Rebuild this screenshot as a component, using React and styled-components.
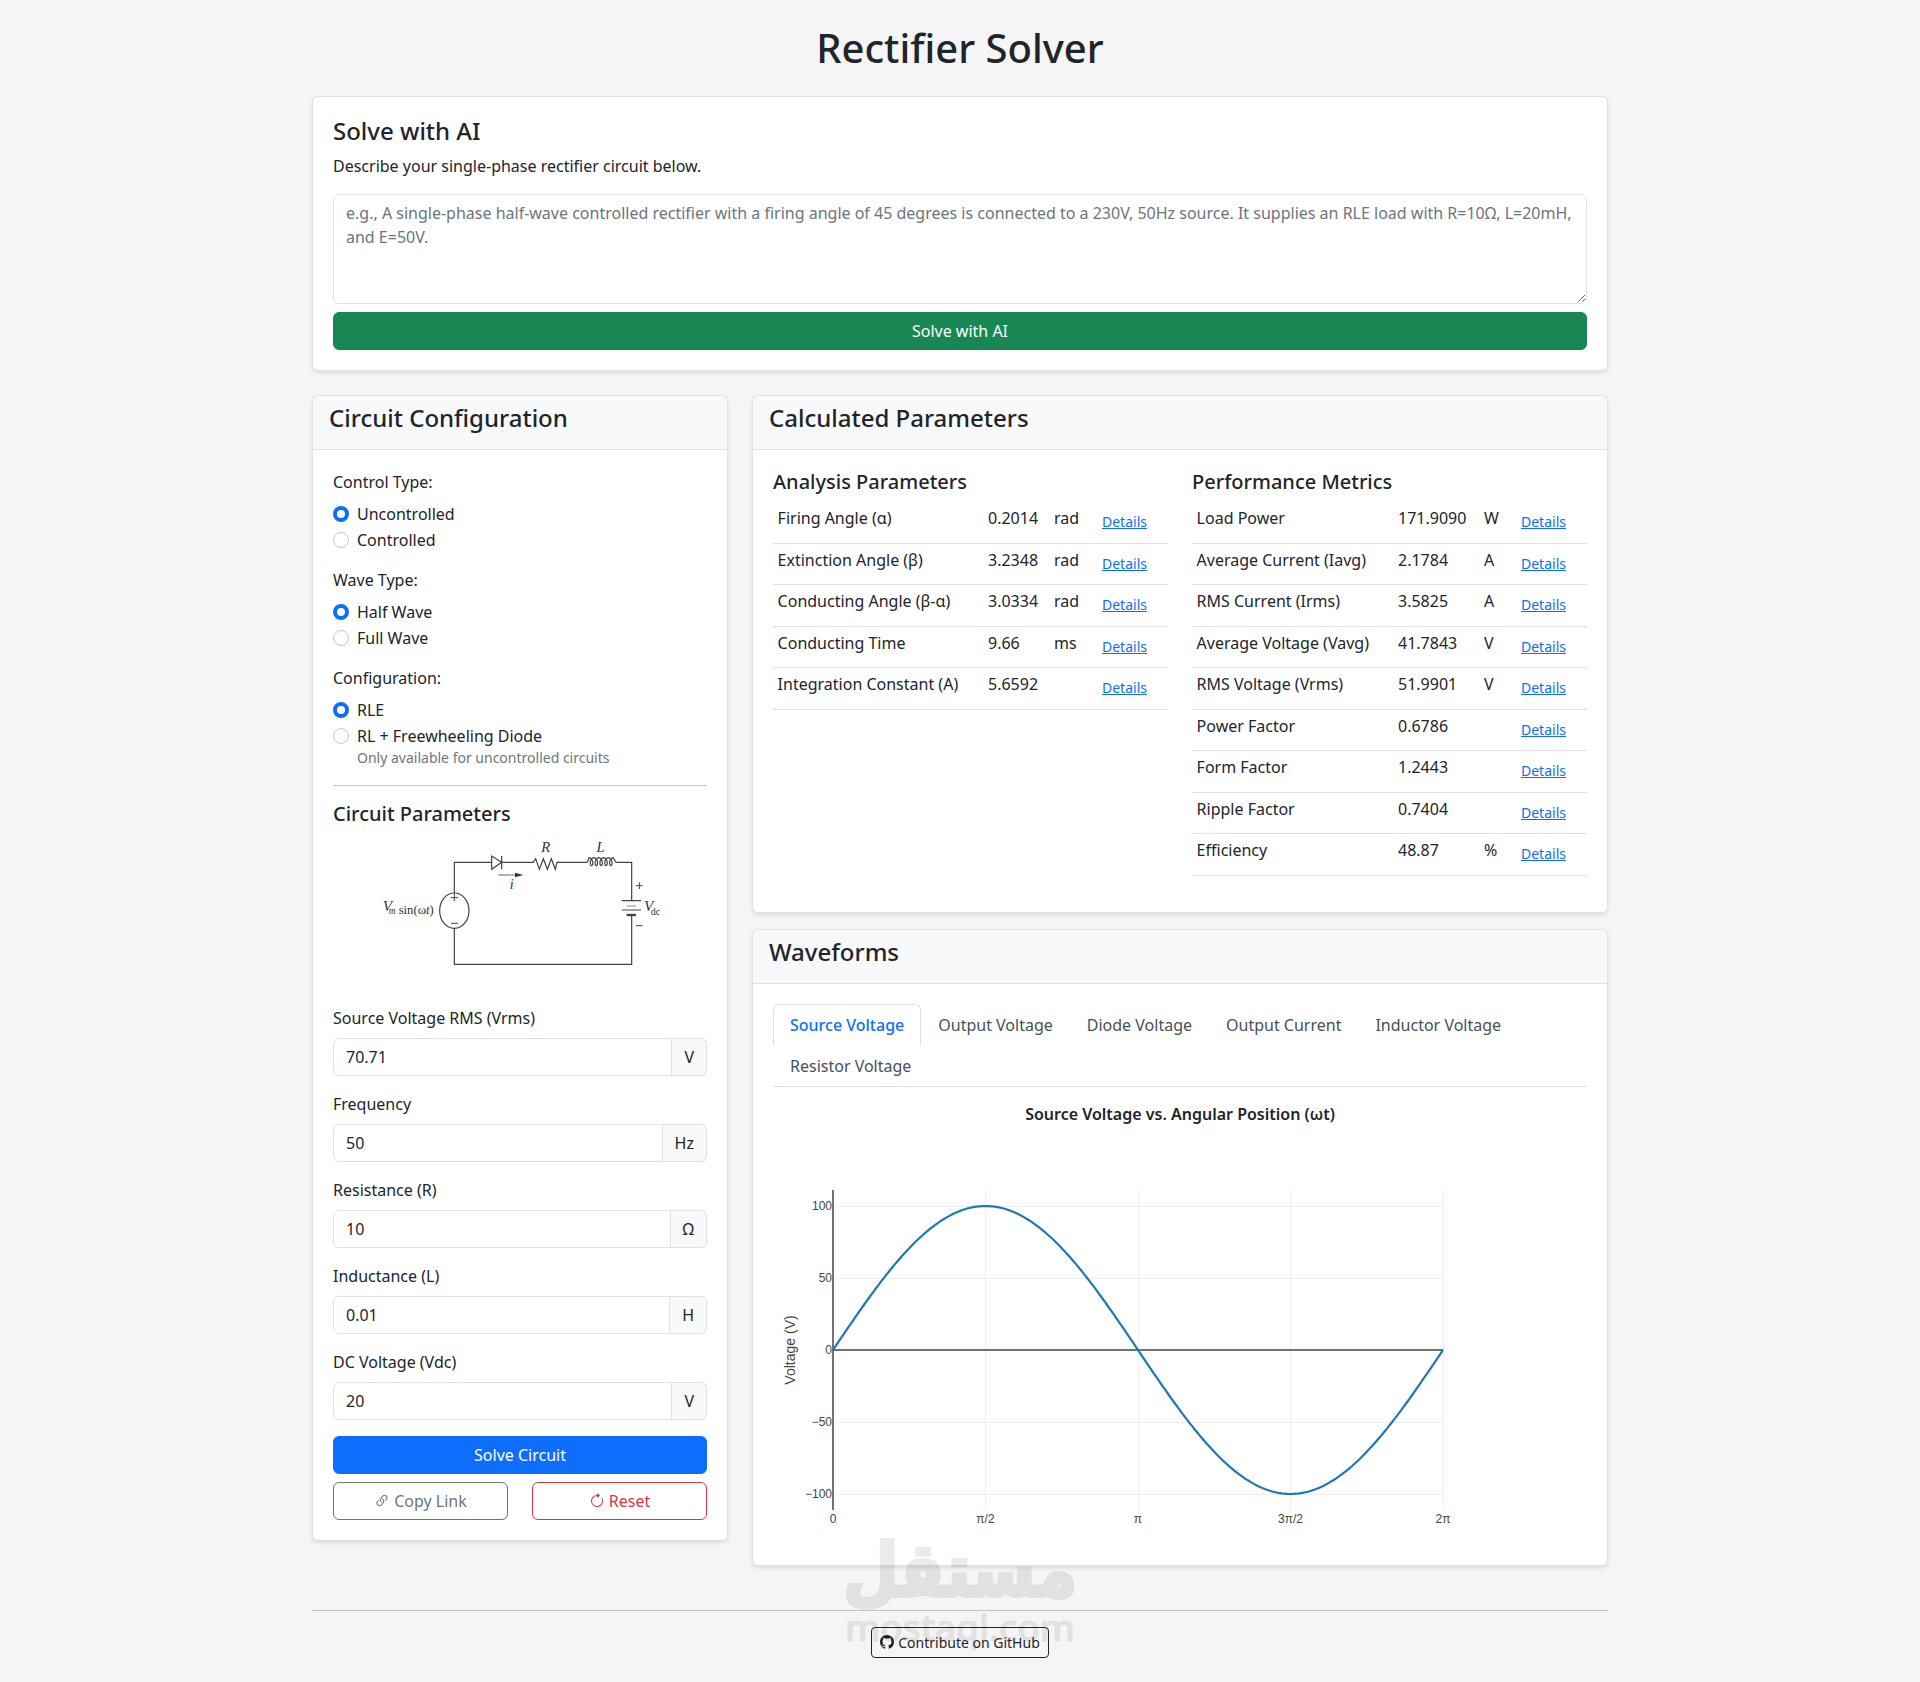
import React from "react";
import styled, { createGlobalStyle } from "styled-components";
import { BsLink45Deg, BsArrowClockwise, BsGithub } from "react-icons/bs";

const GlobalStyle = createGlobalStyle`
  * { box-sizing: border-box; }
  body {
    margin: 0;
    background: #f5f5f5;
    color: #212529;
    font-family: "Noto Sans", sans-serif;
    font-size: 16px;
    line-height: 1.5;
  }
`;

const Page = styled.div`
  position: relative;
  width: 1296px;
  height: 1682px;
  margin: 0 auto;
  padding-top: 24px;
`;

const Title = styled.h1`
  margin: 0 0 24px;
  font-size: 40px;
  font-weight: 500;
  line-height: 48px;
  text-align: center;
`;

const Card = styled.section`
  background: #fff;
  border: 1px solid #dfe1e3;
  border-radius: 6px;
  box-shadow: 0 2px 4px rgba(0, 0, 0, 0.1);
  margin-bottom: ${({ $gap }) => $gap ?? 16}px;
  overflow: hidden;
`;

const CardHeader = styled.div`
  background: #f8f9fa;
  border-bottom: 1px solid #dfe1e3;
  padding: 8px 16px 16px;
`;

const CardBody = styled.div`
  padding: 20px;
`;

const CardTitle = styled.h4`
  margin: 0 0 ${({ $flush }) => ($flush ? "0" : "8px")};
  font-size: 24px;
  font-weight: 500;
  line-height: 28.8px;
`;

const Lead = styled.p`
  margin: 0 0 16px;
`;

const Prompt = styled.textarea`
  display: block;
  width: 100%;
  height: 110px;
  padding: 6px 12px;
  border: 1px solid #dee2e6;
  border-radius: 6px;
  font: inherit;
  color: #212529;
  margin-bottom: 8px;
  outline: none;
  &::placeholder {
    color: #6c757d;
    opacity: 1;
  }
`;

const Button = styled.button`
  display: block;
  width: 100%;
  height: 38px;
  padding: 6px 12px;
  border: 1px solid ${({ $color }) => $color};
  border-radius: 6px;
  background: ${({ $outline, $color }) => ($outline ? "transparent" : $color)};
  color: ${({ $outline, $color }) => ($outline ? $color : "#fff")};
  font: inherit;
  text-align: center;
  cursor: pointer;
  svg {
    font-size: 16px;
    vertical-align: -2px;
    margin-right: 4px;
  }
`;

const Columns = styled.div`
  display: grid;
  grid-template-columns: 416px 856px;
  column-gap: 24px;
  align-items: start;
`;

const Group = styled.div`
  margin-bottom: 16px;
`;

const Label = styled.label`
  display: block;
  margin-bottom: 8px;
`;

const Check = styled.label`
  display: flex;
  align-items: flex-start;
  min-height: 24px;
  margin-bottom: 2px;
`;

const Radio = styled.input.attrs({ type: "radio", readOnly: true })`
  appearance: none;
  flex: none;
  width: 16px;
  height: 16px;
  margin: 4px 8px 0 0;
  border-radius: 50%;
  border: 1px solid #c4c8cc;
  background: #fff;
  &:checked {
    border: 4.5px solid #0d6efd;
  }
`;

const Hint = styled.small`
  display: block;
  margin-left: 24px;
  margin-top: -3px;
  font-size: 14px;
  line-height: 21px;
  color: #6c757d;
`;

const Rule = styled.hr`
  margin: 17px 0 16px;
  border: 0;
  border-top: 1px solid #c4c4c4;
`;

const SectionTitle = styled.h5`
  margin: 0 0 8px;
  font-size: 20px;
  font-weight: 500;
  line-height: 24px;
`;

const Diagram = styled.svg`
  display: block;
  width: 374px;
  height: 156px;
  margin-bottom: 16px;
`;

const InputGroup = styled.div`
  display: flex;
  height: 38px;
`;

const Field = styled.input`
  flex: 1;
  min-width: 0;
  padding: 6px 12px;
  border: 1px solid #dee2e6;
  border-radius: 6px 0 0 6px;
  font: inherit;
  color: #212529;
  outline: none;
`;

const Addon = styled.span`
  display: flex;
  align-items: center;
  padding: 6px 12px;
  border: 1px solid #dee2e6;
  border-left: 0;
  border-radius: 0 6px 6px 0;
  background: #f8f9fa;
`;

const ButtonRow = styled.div`
  display: grid;
  grid-template-columns: 1fr 1fr;
  column-gap: 24px;
  margin-top: 8px;
`;

const ParamColumns = styled.div`
  display: grid;
  grid-template-columns: 395px 395px;
  column-gap: 24px;
`;

const Table = styled.table`
  width: 100%;
  table-layout: fixed;
  border-collapse: collapse;
  margin-bottom: 16px;
  td {
    height: 41.55px;
    padding: 4px;
    vertical-align: top;
    border-bottom: 1px solid #dee2e6;
    white-space: nowrap;
  }
  td:first-child {
    padding-left: 4.6px;
  }
`;

const DetailsLink = styled.a`
  display: inline-block;
  padding: 4px 8px;
  border: 1px solid transparent;
  font-size: 14px;
  line-height: 21px;
  color: #0d6efd;
  text-decoration: underline;
`;

const Tabs = styled.div`
  display: flex;
  flex-wrap: wrap;
  border-bottom: 1px solid #dee2e6;
  margin-bottom: 15px;
`;

const Tab = styled.a`
  display: block;
  padding: 8px 16px;
  margin-bottom: -1px;
  border: 1px solid ${({ $active }) => ($active ? "#dee2e6" : "transparent")};
  border-bottom-color: ${({ $active }) => ($active ? "#fff" : "transparent")};
  border-radius: 6px 6px 0 0;
  font-weight: ${({ $active }) => ($active ? 500 : 400)};
  color: ${({ $active }) => ($active ? "#0d6efd" : "#495057")};
`;

const ChartTitle = styled.h6`
  margin: 0 0 4px;
  font-size: 16px;
  font-weight: 600;
  line-height: 24px;
  text-align: center;
`;

const Chart = styled.svg`
  display: block;
  width: 814px;
  height: 415px;
  text {
    font-family: "Liberation Sans", sans-serif;
    font-size: 12px;
    fill: #444;
  }
`;

const Footer = styled.footer`
  margin-top: 28px;
  border-top: 1px solid #c4c4c4;
  padding-top: 16px;
  text-align: center;
`;

const GithubLink = styled.a`
  display: inline-flex;
  align-items: center;
  gap: 4px;
  height: 31px;
  padding: 4px 8px;
  border: 1px solid #212529;
  border-radius: 4px;
  font-size: 14px;
  line-height: 21px;
  color: #212529;
  text-decoration: none;
`;

const Watermark = styled.div`
  position: absolute;
  left: 50%;
  top: 1532px;
  width: 300px;
  margin-left: -150px;
  text-align: center;
  color: #000;
  opacity: 0.075;
  pointer-events: none;
`;

const WatermarkArabic = styled.div`
  font-family: "DejaVu Sans", sans-serif;
  font-weight: 700;
  font-size: 64px;
  line-height: 78px;
  -webkit-text-stroke: 3.5px #000;
  transform: scaleY(1.15);
`;

const WatermarkLatin = styled.div`
  font-family: "Noto Sans", sans-serif;
  font-weight: 500;
  font-size: 37px;
  line-height: 34px;
  -webkit-text-stroke: 1.2px #000;
`;

const radioGroups = [
  { label: "Control Type:", options: ["Uncontrolled", "Controlled"] },
  { label: "Wave Type:", options: ["Half Wave", "Full Wave"] },
  { label: "Configuration:", options: ["RLE", "RL + Freewheeling Diode"], hint: "Only available for uncontrolled circuits" },
];

const fields = [
  { label: "Source Voltage RMS (Vrms)", value: "70.71", unit: "V" },
  { label: "Frequency", value: "50", unit: "Hz" },
  { label: "Resistance (R)", value: "10", unit: "Ω" },
  { label: "Inductance (L)", value: "0.01", unit: "H" },
  { label: "DC Voltage (Vdc)", value: "20", unit: "V" },
];

const analysis = [
  ["Firing Angle (α)", "0.2014", "rad"],
  ["Extinction Angle (β)", "3.2348", "rad"],
  ["Conducting Angle (β-α)", "3.0334", "rad"],
  ["Conducting Time", "9.66", "ms"],
  ["Integration Constant (A)", "5.6592", ""],
];

const metrics = [
  ["Load Power", "171.9090", "W"],
  ["Average Current (Iavg)", "2.1784", "A"],
  ["RMS Current (Irms)", "3.5825", "A"],
  ["Average Voltage (Vavg)", "41.7843", "V"],
  ["RMS Voltage (Vrms)", "51.9901", "V"],
  ["Power Factor", "0.6786", ""],
  ["Form Factor", "1.2443", ""],
  ["Ripple Factor", "0.7404", ""],
  ["Efficiency", "48.87", "%"],
];

const tabs = ["Source Voltage", "Output Voltage", "Diode Voltage", "Output Current", "Inductor Voltage", "Resistor Voltage"];

const ParamTable = ({ rows, widths }) => (
  <Table>
    <colgroup>
      {widths.map((w, i) => (
        <col key={i} width={w} />
      ))}
    </colgroup>
    <tbody>
      {rows.map(([name, value, unit]) => (
        <tr key={name}>
          <td>{name}</td>
          <td>{value}</td>
          <td>{unit}</td>
          <td>
            <DetailsLink href="#">Details</DetailsLink>
          </td>
        </tr>
      ))}
    </tbody>
  </Table>
);

// inductor drawn as a row of loops
const coilPath = () => {
  const pts = ["802 247"];
  for (let i = 0; i <= 120; i++) {
    const t = 0.5 + (i / 120) * 5;
    const th = 2 * Math.PI * t;
    const x = 800 + 14.5 * t - 7 * Math.sin(th);
    const y = 245 + 12 * Math.cos(th);
    pts.push(`${x.toFixed(1)} ${y.toFixed(1)}`);
  }
  pts.push("888 247");
  return "M" + pts.join("L");
};

const CircuitDiagram = () => (
  <Diagram viewBox="39 162 1122 468">
    <g fill="none" stroke="#444" strokeWidth="3.6">
      <path d="M403 340V247H515M545 247H640l7-11 11 32 12-32 12 32 12-32 12 32 5-21H802" />
      <path d="M515 228V268L545 247ZM545 228V268" />
      <path d={coilPath()} />
      <path d="M888 247H935V360M935 405V553H403V445" />
      <ellipse cx="403" cy="392" rx="44" ry="53" />
      <path d="M905 362H963M905 390H963" />
      <path d="M920 378H948" stroke="#999" />
      <path d="M920 405H948" strokeWidth="7" />
      <path d="M535 285H590" strokeDasharray="4 1" />
      <path d="M392 353H414M403 342V364M393 430H414M948 317H968M958 307V327M948 437H968" strokeWidth="3" />
    </g>
    <path d="M585 278L610 285L585 292Z" fill="#333" />
    <g fontFamily="'Liberation Serif', serif" fill="#333">
      <text x="677" y="216" fontSize="44" fontStyle="italic" textAnchor="middle">R</text>
      <text x="842" y="216" fontSize="44" fontStyle="italic" textAnchor="middle">L</text>
      <text x="575" y="327" fontSize="42" fontStyle="italic" textAnchor="middle">i</text>
      <text x="188" y="392" fontSize="46" fontStyle="italic">V</text>
      <text x="206" y="402" fontSize="28" fontStyle="italic">m</text>
      <text x="236" y="402" fontSize="38">sin(ω<tspan fontStyle="italic">t</tspan>)</text>
      <text x="972" y="392" fontSize="46" fontStyle="italic">V</text>
      <text x="992" y="404" fontSize="30">dc</text>
    </g>
  </Diagram>
);

// plot coordinates inside the svg, which starts at x=773, y=1129 on the page
const plot = { left: 60, right: 670, zero: 220, amp: 144 };

const sinePath = () => {
  const pts = [];
  for (let i = 0; i <= 200; i++) {
    const t = i / 200;
    const x = plot.left + t * (plot.right - plot.left);
    const y = plot.zero - plot.amp * Math.sin(t * 2 * Math.PI);
    pts.push(`${x.toFixed(2)} ${y.toFixed(2)}`);
  }
  return "M" + pts.join("L");
};

const xTicks = [
  ["0", 0],
  ["π/2", 0.25],
  ["π", 0.5],
  ["3π/2", 0.75],
  ["2π", 1],
];
const yTicks = [100, 50, 0, -50, -100];

const WaveChart = () => {
  const width = plot.right - plot.left;
  return (
    <Chart viewBox="0 0 814 415">
      {xTicks.slice(1).map(([label, f]) => (
        <line key={label} x1={plot.left + f * width} x2={plot.left + f * width} y1="60" y2="380" stroke="#eee" shapeRendering="crispEdges" />
      ))}
      {yTicks.map((v) => (
        <line key={v} x1={plot.left} x2={plot.right} y1={plot.zero - v * 1.44} y2={plot.zero - v * 1.44} stroke="#eee" shapeRendering="crispEdges" />
      ))}
      <line x1={plot.left} x2={plot.right} y1={plot.zero} y2={plot.zero} stroke="#444" strokeWidth="1.5" />
      <line x1={plot.left} x2={plot.left} y1="60" y2="380" stroke="#444" strokeWidth="1.5" />
      <path d={sinePath()} fill="none" stroke="#1f77b4" strokeWidth="2.2" />
      {yTicks.map((v) => (
        <text key={v} x={plot.left - 1} y={plot.zero - v * 1.44 + 4} textAnchor="end">
          {v < 0 ? `−${-v}` : v}
        </text>
      ))}
      {xTicks.map(([label, f]) => (
        <text key={label} x={plot.left + f * width} y="393" textAnchor="middle">
          {label}
        </text>
      ))}
      <text x="18" y="220" textAnchor="middle" transform="rotate(-90 18 220)" dy="4" style={{ fontSize: 14 }}>
        Voltage (V)
      </text>
    </Chart>
  );
};

const App = () => (
  <Page>
    <GlobalStyle />
    <Title>Rectifier Solver</Title>

    <Card $gap={24}>
      <CardBody>
        <CardTitle>Solve with AI</CardTitle>
        <Lead>Describe your single-phase rectifier circuit below.</Lead>
        <Prompt placeholder="e.g., A single-phase half-wave controlled rectifier with a firing angle of 45 degrees is connected to a 230V, 50Hz source. It supplies an RLE load with R=10Ω, L=20mH, and E=50V." />
        <Button $color="#198754">Solve with AI</Button>
      </CardBody>
    </Card>

    <Columns>
      <Card>
        <CardHeader>
          <CardTitle $flush>Circuit Configuration</CardTitle>
        </CardHeader>
        <CardBody>
          {radioGroups.map((group) => (
            <Group key={group.label}>
              <Label>{group.label}</Label>
              {group.options.map((option, i) => (
                <Check key={option}>
                  <Radio name={group.label} defaultChecked={i === 0} />
                  {option}
                </Check>
              ))}
              {group.hint && <Hint>{group.hint}</Hint>}
            </Group>
          ))}
          <Rule />
          <SectionTitle>Circuit Parameters</SectionTitle>
          <CircuitDiagram />
          {fields.map((field) => (
            <Group key={field.label}>
              <Label>{field.label}</Label>
              <InputGroup>
                <Field defaultValue={field.value} />
                <Addon>{field.unit}</Addon>
              </InputGroup>
            </Group>
          ))}
          <Button $color="#0d6efd">Solve Circuit</Button>
          <ButtonRow>
            <Button $outline $color="#6c757d">
              <BsLink45Deg />
              Copy Link
            </Button>
            <Button $outline $color="#dc3545">
              <BsArrowClockwise />
              Reset
            </Button>
          </ButtonRow>
        </CardBody>
      </Card>

      <div>
        <Card>
          <CardHeader>
            <CardTitle $flush>Calculated Parameters</CardTitle>
          </CardHeader>
          <CardBody>
            <ParamColumns>
              <div>
                <SectionTitle>Analysis Parameters</SectionTitle>
                <ParamTable rows={analysis} widths={[211, 66, 39, 79]} />
              </div>
              <div>
                <SectionTitle>Performance Metrics</SectionTitle>
                <ParamTable rows={metrics} widths={[202, 86, 28, 79]} />
              </div>
            </ParamColumns>
          </CardBody>
        </Card>

        <Card>
          <CardHeader>
            <CardTitle $flush>Waveforms</CardTitle>
          </CardHeader>
          <CardBody>
            <Tabs>
              {tabs.map((tab, i) => (
                <Tab key={tab} $active={i === 0}>
                  {tab}
                </Tab>
              ))}
            </Tabs>
            <ChartTitle>Source Voltage vs. Angular Position (ωt)</ChartTitle>
            <WaveChart />
          </CardBody>
        </Card>
      </div>
    </Columns>

    <Footer>
      <GithubLink href="#">
        <BsGithub />
        Contribute on GitHub
      </GithubLink>
    </Footer>

    <Watermark>
      <WatermarkArabic>مستقل</WatermarkArabic>
      <WatermarkLatin>mostaql.com</WatermarkLatin>
    </Watermark>
  </Page>
);

export default App;
